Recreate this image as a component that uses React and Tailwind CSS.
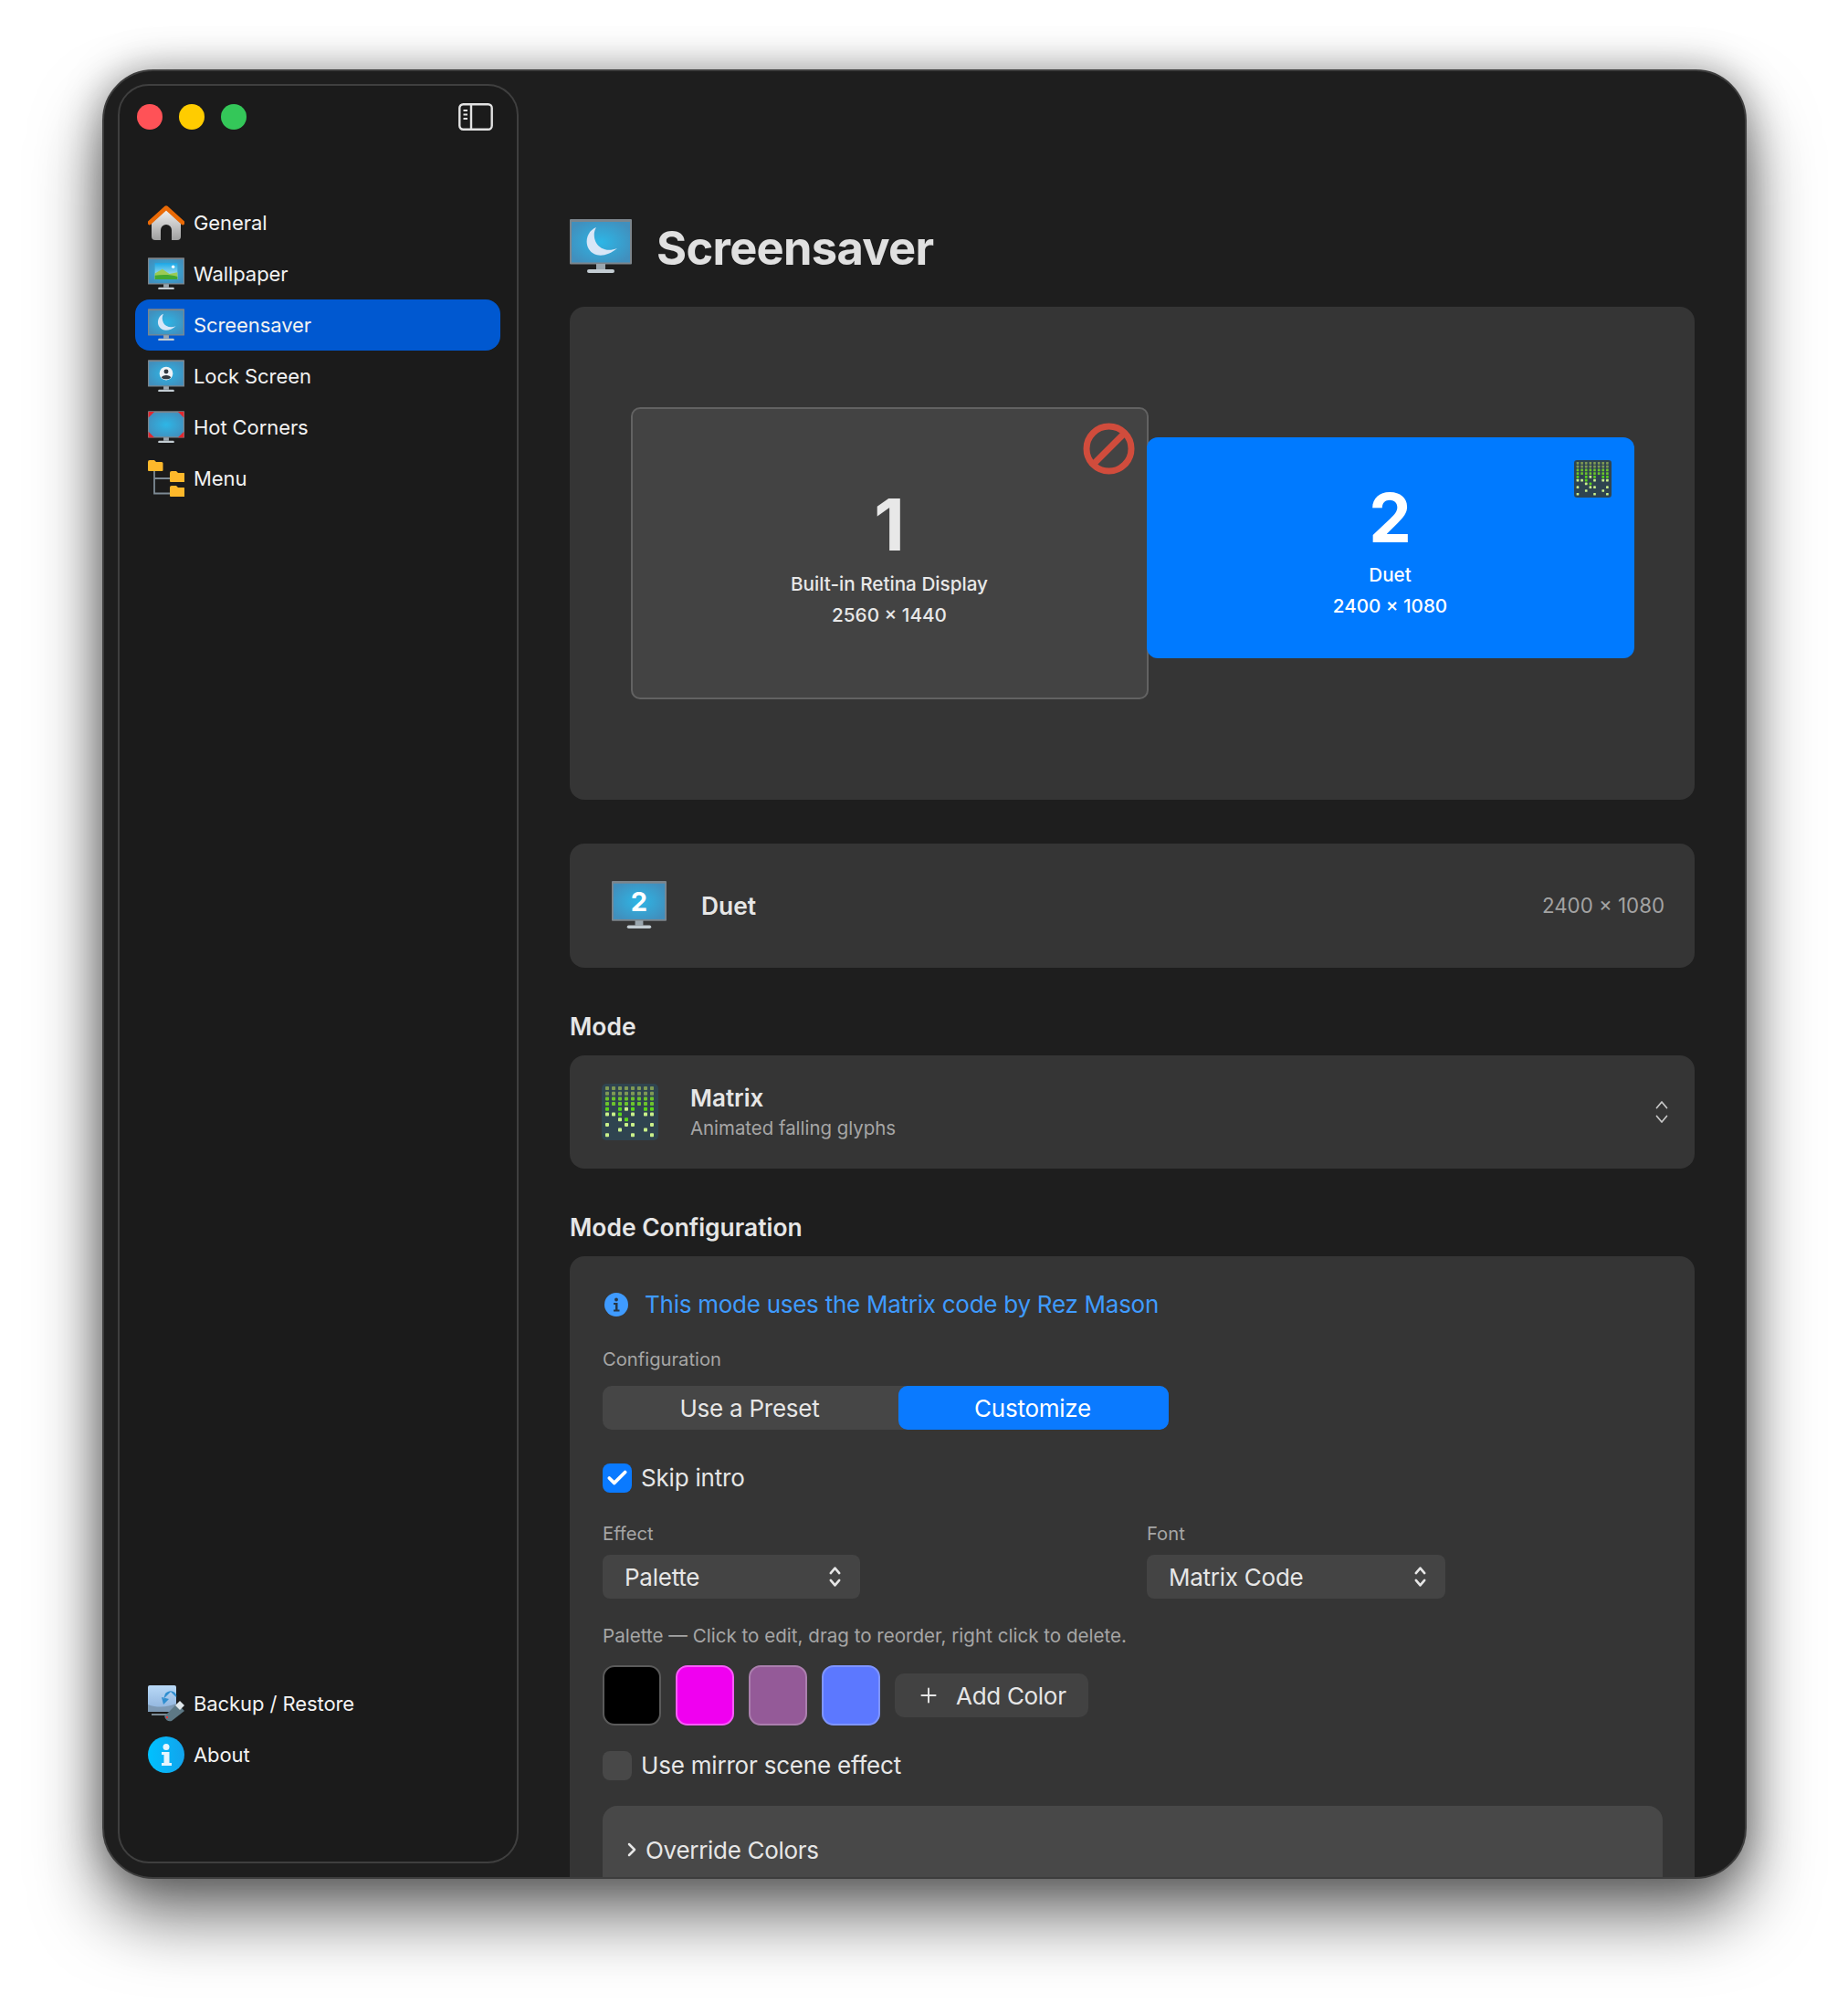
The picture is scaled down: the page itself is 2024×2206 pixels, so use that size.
import React from "react";
import { Check, ChevronRight, Plus } from "lucide-react";

function Stand() {
  return (
    <>
      <rect x="29" y="49" width="10" height="6" fill="#9aa6ae" />
      <rect x="19" y="55" width="30" height="4" rx="2" fill="#c3ccd2" />
    </>
  );
}

function Monitor({ id, children, className }) {
  return (
    <svg viewBox="0 0 68 60" className={className}>
      <defs>
        <radialGradient id={id} cx="50%" cy="50%" r="60%">
          <stop offset="0%" stopColor="#2db6e6" />
          <stop offset="100%" stopColor="#418fbd" />
        </radialGradient>
      </defs>
      <rect x="0" y="0" width="68" height="49.5" rx="1" fill="#7c858c" />
      <rect x="2" y="3" width="64" height="44.5" fill={`url(#${id})`} />
      <Stand />
      {children}
    </svg>
  );
}

const Moon = () => (
  <path d="M29 9 C19 13 16 25 21 33 C27 42 40 42 52 32 C42 36 33 33 29 26 C26 20 26 14 29 9 Z" fill="#d8e6f7" />
);

function ScreensaverIcon({ id, className }) {
  return (
    <Monitor id={id} className={className}>
      <Moon />
    </Monitor>
  );
}

function WallpaperIcon({ className }) {
  return (
    <Monitor id="m-wall" className={className}>
      <defs>
        <linearGradient id="sky" x1="0" y1="0" x2="0" y2="1">
          <stop offset="0%" stopColor="#1aa8e8" />
          <stop offset="100%" stopColor="#d2f0ef" />
        </linearGradient>
      </defs>
      <rect x="13" y="10" width="42" height="30" fill="url(#sky)" />
      <circle cx="47" cy="17" r="3" fill="#f4fbff" />
      <path d="M13 40 V29 L27 21 L40 30 L55 27 V40 Z" fill="#9ccb55" />
      <path d="M13 40 V33 C26 31 42 31 55 35 V40 Z" fill="#42a832" />
    </Monitor>
  );
}

function LockIcon({ className }) {
  return (
    <Monitor id="m-lock" className={className}>
      <circle cx="34" cy="25" r="12.500" fill="#eef3f7" />
      <circle cx="34" cy="21.500" r="4.200" fill="#333b42" />
      <path d="M25.500 33 C25.500 26.500 42.500 26.500 42.500 33 C39 36.500 29 36.500 25.500 33 Z" fill="#333b42" />
    </Monitor>
  );
}

function CornersIcon({ className }) {
  return (
    <Monitor id="m-corner" className={className}>
      <path d="M1 1 H12 L1 12 Z M67 1 H56 L67 12 Z M1 49 H12 L1 38 Z M67 49 H56 L67 38 Z" fill="#e2272e" />
    </Monitor>
  );
}

function Folder({ x, y }) {
  return (
    <g transform={`translate(${x} ${y})`}>
      <path d="M0 2 a2 2 0 0 1 2-2 h5 l2 2 h6 a1.5 1.5 0 0 1 1.500 1.500 V11 a1 1 0 0 1-1 1 H1 a1 1 0 0 1-1-1 Z" fill="#fdb82b" />
    </g>
  );
}

function MenuIcon({ className }) {
  return (
    <svg viewBox="0 0 40 40" className={className}>
      <path d="M7 10 V36.500 H25 M7 20 H25" fill="none" stroke="#7d8a94" strokeWidth="1.800" />
      <Folder x="0" y="0" />
      <Folder x="24" y="12" />
      <Folder x="24" y="28" />
    </svg>
  );
}

function HomeIcon({ className }) {
  return (
    <svg viewBox="0 0 40 38" className={className}>
      <defs>
        <linearGradient id="house" x1="0" y1="0" x2="0" y2="1">
          <stop offset="0%" stopColor="#f2f2f2" />
          <stop offset="100%" stopColor="#9f9f9f" />
        </linearGradient>
      </defs>
      <path d="M4 18 L20 4 L36 18 V34 a4 4 0 0 1-4 4 H8 a4 4 0 0 1-4-4 Z" fill="url(#house)" />
      <path d="M14 38 V27 a6 6 0 0 1 12 0 V38 Z" fill="#1c1c1c" />
      <path d="M1.800 19 L20 2.500 L38.200 19" fill="none" stroke="#ea6a06" strokeWidth="4.500" strokeLinecap="round" strokeLinejoin="round" />
    </svg>
  );
}

function BackupIcon({ className }) {
  return (
    <svg viewBox="0 0 40 40" className={className}>
      <defs>
        <linearGradient id="bk" x1="0" y1="0" x2="0" y2="1">
          <stop offset="0%" stopColor="#b9d9f7" />
          <stop offset="100%" stopColor="#8fb3dc" />
        </linearGradient>
      </defs>
      <path d="M0 2 a2 2 0 0 1 2-2 H29 a2 2 0 0 1 2 2 V27 H0 Z" fill="url(#bk)" />
      <path d="M0 21 C10 25 22 24 31 20 V29 H0 Z" fill="#7d99b4" />
      <path d="M4 31 H22 V33 H4 Z" fill="#7c8b96" />
      <path d="M17 15 L25 7 L31 13 C33 10 26 2 19 9 Z M15 13 L23 15 L17 21 Z" fill="#2f8ed0" />
      <path d="M18 34 L32 20 L40 28 L26 39 C23 40 20 39 18 34 Z" fill="#5d7885" />
      <path d="M30 22 L35 17 L40 22 L35 27 Z" fill="#dfe6ea" />
      <circle cx="21" cy="35" r="1.200" fill="#e2373c" />
    </svg>
  );
}

function AboutIcon({ className }) {
  return (
    <svg viewBox="0 0 40 40" className={className}>
      <defs>
        <linearGradient id="ab" x1="0" y1="0" x2="1" y2="0">
          <stop offset="0%" stopColor="#00c1ff" />
          <stop offset="100%" stopColor="#12a3ec" />
        </linearGradient>
      </defs>
      <circle cx="20" cy="20" r="20" fill="url(#ab)" />
      <circle cx="20" cy="11.500" r="3.500" fill="#e6f5fd" />
      <path d="M15 17 H23.500 V29 H26 V32 H15 V29 H17.500 V20 H15 Z" fill="#e6f5fd" />
    </svg>
  );
}

const COLS = [
  [1, 1, 1, 1, 1, 1, 0, 1, 0, 1],
  [1, 1, 1, 1, 0, 1, 0, 0, 0, 0],
  [1, 1, 1, 1, 1, 1, 1, 0, 1, 0],
  [1, 1, 1, 1, 1, 0, 1, 1, 0, 0],
  [1, 1, 1, 1, 1, 1, 0, 1, 0, 1],
  [1, 1, 1, 1, 0, 0, 0, 0, 0, 0],
  [1, 1, 1, 1, 1, 1, 0, 0, 1, 0],
  [1, 1, 1, 1, 1, 1, 0, 1, 0, 1],
];

function dotColor(row, hasBelow) {
  if (!hasBelow && row > 3) return "#c9f08a";
  if (row < 2) return "#7e9a55";
  if (row < 4) return "#6cc42c";
  return "#5ad61a";
}

function MatrixThumb({ className }) {
  return (
    <svg viewBox="0 0 62 62" className={className}>
      <rect x="0" y="0" width="62" height="62" rx="5" fill="#2f4450" />
      {COLS.map((col, c) =>
        col.map((on, r) =>
          on ? (
            <rect
              key={`${c}-${r}`}
              x={4 + c * 7}
              y={3 + r * 5.700}
              width="4"
              height="4"
              rx="0.800"
              fill={dotColor(r, col[r + 1] === 1)}
            />
          ) : null
        )
      )}
    </svg>
  );
}

function Chevrons({ className, width = 2.400 }) {
  return (
    <svg viewBox="0 0 16 28" className={className} fill="none" stroke="currentColor" strokeWidth={width} strokeLinecap="round" strokeLinejoin="round">
      <path d="M2.500 9.500 L8 3 L13.500 9.500" />
      <path d="M2.500 18.500 L8 25 L13.500 18.500" />
    </svg>
  );
}

function NavItem({ icon, label, active }) {
  return (
    <div className={`flex items-center h-[56px] pl-[14px] rounded-[16px] ${active ? "bg-[#0058d0]" : ""}`}>
      <div className="w-[40px] h-[40px] flex items-center justify-center shrink-0">{icon}</div>
      <span className="ml-[10px] text-[22px] tracking-[-0.08px] text-[#f2f2f2]">{label}</span>
    </div>
  );
}

function Sidebar() {
  return (
    <aside className="relative w-[439px] shrink-0 ml-[15px] mt-[14px] mb-[15px] border-[2px] border-[#3f3f3f] rounded-[34px] bg-[#1b1b1b] flex flex-col pl-[17px] pr-[18px]">
      <div className="flex items-center h-[62px] mt-[3px]">
        <div className="flex gap-[18px] ml-[2px]">
          <div className="w-[28px] h-[28px] rounded-full bg-[#ff5257]" />
          <div className="w-[28px] h-[28px] rounded-full bg-[#ffcc00]" />
          <div className="w-[28px] h-[28px] rounded-full bg-[#34c759]" />
        </div>
        <svg viewBox="0 0 38 30" className="w-[38px] h-[30px] ml-auto mr-[8px]" fill="none">
          <rect x="1.300" y="1.300" width="35.400" height="27.400" rx="4" stroke="#e2e2e2" strokeWidth="2.400" />
          <path d="M14 1.500 V28.500" stroke="#e2e2e2" strokeWidth="2.400" />
          <path d="M5.500 8 H10 M5.500 12.500 H10 M5.500 17 H10" stroke="#e2e2e2" strokeWidth="1.800" />
        </svg>
      </div>
      <nav className="mt-[57px] flex flex-col">
        <NavItem icon={<HomeIcon className="w-[40px] h-[38px]" />} label="General" />
        <NavItem icon={<WallpaperIcon className="w-[40px] h-[36px]" />} label="Wallpaper" />
        <NavItem icon={<ScreensaverIcon id="m-moon1" className="w-[40px] h-[36px]" />} label="Screensaver" active />
        <NavItem icon={<LockIcon className="w-[40px] h-[36px]" />} label="Lock Screen" />
        <NavItem icon={<CornersIcon className="w-[40px] h-[36px]" />} label="Hot Corners" />
        <NavItem icon={<MenuIcon className="w-[40px] h-[40px]" />} label="Menu" />
      </nav>
      <div className="mt-auto mb-[89px] flex flex-col">
        <NavItem icon={<BackupIcon className="w-[40px] h-[40px]" />} label="Backup / Restore" />
        <NavItem icon={<AboutIcon className="w-[40px] h-[40px]" />} label="About" />
      </div>
    </aside>
  );
}

function Card({ className = "", children }) {
  return <div className={`bg-[#353535] rounded-[16px] ${className}`}>{children}</div>;
}

function Display1() {
  return (
    <div className="relative w-[567px] h-[320px] shrink-0 rounded-[10px] border-[2px] border-[#626262] bg-[#434343] flex flex-col items-center text-[#e8e8e8]">
      <svg viewBox="0 0 57 57" className="absolute right-[13px] top-[15px] w-[57px] h-[57px]" fill="none" stroke="#d04c3c" strokeWidth="7">
        <circle cx="28.500" cy="28.500" r="24.500" />
        <path d="M11.500 45.500 L45.500 11.500" />
      </svg>
      <div className="mt-[82px] h-[90px] text-[78px] leading-[90px] font-bold">1</div>
      <div className="mt-[3px] text-[20.7px] leading-[34px] font-medium">Built-in Retina Display</div>
      <div className="text-[20.7px] leading-[34px] font-medium">2560 × 1440</div>
    </div>
  );
}

function Display2() {
  return (
    <div className="relative w-[534px] h-[242px] shrink-0 -ml-[2px] mb-[12px] rounded-[12px] bg-[#007aff] flex flex-col items-center text-white">
      <MatrixThumb className="absolute right-[25px] top-[25px] w-[41px] h-[41px]" />
      <div className="mt-[43px] h-[90px] text-[74px] leading-[90px] font-bold">2</div>
      <div className="mt-[1px] text-[20.6px] leading-[34px] font-medium">Duet</div>
      <div className="text-[20.6px] leading-[34px] font-medium">2400 × 1080</div>
    </div>
  );
}

function Label({ className = "", children }) {
  return <div className={`text-[20.2px] leading-[28px] text-[#a6a6a6] ${className}`}>{children}</div>;
}

function CheckRow({ checked, children }) {
  return (
    <div className="flex items-center h-[32px]">
      <div className={`w-[32px] h-[32px] rounded-[8px] flex items-center justify-center ${checked ? "bg-[#0a7aff]" : "bg-[#484848]"}`}>
        {checked && <Check className="w-[26px] h-[26px] text-white" strokeWidth={3.500} />}
      </div>
      <span className="ml-[10px] -mt-[1px] text-[26px] tracking-[-0.2px] text-[#e6e6e6]">{children}</span>
    </div>
  );
}

function Select({ className, label }) {
  return (
    <div className={`h-[48px] rounded-[8px] bg-[#444444] flex items-center pl-[24px] pr-[20px] justify-between text-[#e6e6e6] ${className}`}>
      <span className="text-[26px] tracking-[-0.25px]">{label}</span>
      <Chevrons className="w-[15px] h-[24px]" width={3} />
    </div>
  );
}

function Swatch({ bg, border }) {
  return <div className={`w-[64px] h-[66px] rounded-[13px] border-[2px] ${bg} ${border}`} />;
}

export default function App() {
  return (
    <div className="w-[2024px] h-[2206px] bg-white pt-[76px] pl-[112px] font-['Inter',sans-serif]">
      <div className="w-[1801px] h-[1982px] rounded-[56px] bg-[#1e1e1e] border-[2px] border-[#3d3d3d] shadow-[0_42px_74px_rgba(0,0,0,0.55),0_0_44px_rgba(0,0,0,0.35)] overflow-hidden flex">
        <Sidebar />
        <main className="flex-1 pl-[56px] pr-[55px] pt-[162px] min-w-0">
          <div className="flex items-center h-[59px] mb-[37px]">
            <ScreensaverIcon id="m-moon2" className="w-[68px] h-[60px] shrink-0" />
            <h1 className="ml-[27px] mt-[5px] text-[50.6px] font-bold tracking-[-0.7px] text-[#e0e0e0]">Screensaver</h1>
          </div>

          <Card className="h-[540px] flex items-center justify-center">
            <Display1 />
            <Display2 />
          </Card>

          <Card className="mt-[48px] h-[136px] flex items-center pl-[46px] pr-[33px]">
            <Monitor id="m-two" className="w-[60px] h-[53px] -mt-[1px] shrink-0">
              <text x="34" y="37" textAnchor="middle" fontSize="33" fontWeight="700" fill="#fff" fontFamily="Inter">2</text>
            </Monitor>
            <span className="ml-[38px] mt-[2px] text-[26.4px] font-semibold text-[#e6e6e6]">Duet</span>
            <span className="ml-auto text-[22.3px] text-[#a3a3a3]">2400 × 1080</span>
          </Card>

          <h2 className="mt-[48px] mb-[16px] h-[32px] text-[26.4px] leading-[32px] font-semibold text-[#e6e6e6]">Mode</h2>
          <Card className="h-[124px] flex items-center pl-[35px] pr-[26px]">
            <MatrixThumb className="w-[62px] h-[62px] shrink-0" />
            <div className="ml-[35px] mt-[2px] flex flex-col">
              <span className="text-[26px] leading-[34px] font-semibold text-[#e6e6e6]">Matrix</span>
              <span className="text-[20.4px] leading-[32px] text-[#a6a6a6]">Animated falling glyphs</span>
            </div>
            <Chevrons className="ml-auto w-[20px] h-[28px] text-[#c8c8c8]" width={1.700} />
          </Card>

          <h2 className="mt-[48px] mb-[16px] h-[32px] text-[26.4px] leading-[32px] font-semibold text-[#e6e6e6]">Mode Configuration</h2>
          <Card className="pt-[37px] px-[36px] pb-[100px]">
            <div className="flex items-center h-[32px]">
              <svg viewBox="0 0 26 26" className="w-[26px] h-[26px] ml-[2px] shrink-0">
                <circle cx="13" cy="13" r="13" fill="#3f9bff" />
                <circle cx="13" cy="7.500" r="1.900" fill="#263747" />
                <path d="M10 11 H14.500 V18.500 H16.500 V20.500 H10 V18.500 H12 V13 H10 Z" fill="#263747" />
              </svg>
              <span className="ml-[18px] -mt-[1px] text-[26px] tracking-[-0.26px] text-[#3f9bff]">This mode uses the Matrix code by Rez Mason</span>
            </div>

            <Label className="mt-[30px]">Configuration</Label>
            <div className="mt-[15px] w-[620px] h-[48px] rounded-[10px] bg-[#464646] flex text-[26px] tracking-[-0.25px]">
              <div className="w-[324px] pr-[2px] flex items-center justify-center text-[#e6e6e6]">Use a Preset</div>
              <div className="flex-1 pr-[2px] rounded-[10px] bg-[#0a7aff] flex items-center justify-center text-white">Customize</div>
            </div>

            <div className="mt-[37px]">
              <CheckRow checked>Skip intro</CheckRow>
            </div>

            <div className="mt-[31px] flex">
              <div className="w-[596px]">
                <Label>Effect</Label>
                <Select className="mt-[9px] w-[282px]" label="Palette" />
              </div>
              <div>
                <Label>Font</Label>
                <Select className="mt-[9px] w-[327px]" label="Matrix Code" />
              </div>
            </div>

            <Label className="mt-[27px] text-[20.6px]">Palette — Click to edit, drag to reorder, right click to delete.</Label>

            <div className="mt-[18px] flex items-center gap-[16px]">
              <Swatch bg="bg-black" border="border-[#5a5a5a]" />
              <Swatch bg="bg-[#f000f0]" border="border-[#f85cf8]" />
              <Swatch bg="bg-[#945a98]" border="border-[#ab7fae]" />
              <Swatch bg="bg-[#5c78ff]" border="border-[#7f95ff]" />
              <div className="h-[48px] w-[212px] rounded-[10px] bg-[#424242] flex items-center pl-[24px] text-[#e6e6e6]">
                <Plus className="w-[26px] h-[26px]" strokeWidth={1.800} />
                <span className="ml-[17px] text-[26px] tracking-[-0.3px]">Add Color</span>
              </div>
            </div>

            <div className="mt-[28px]">
              <CheckRow>Use mirror scene effect</CheckRow>
            </div>

            <div className="mt-[28px] w-[1161px] h-[160px] rounded-t-[16px] bg-[#484848] pt-[31px] pl-[20px] flex items-start text-[#e6e6e6]">
              <div className="flex items-center h-[34px]">
                <ChevronRight className="w-[24px] h-[24px]" strokeWidth={2.500} />
                <span className="ml-[3px] text-[26px] tracking-[-0.3px]">Override Colors</span>
              </div>
            </div>
          </Card>
        </main>
      </div>
    </div>
  );
}
